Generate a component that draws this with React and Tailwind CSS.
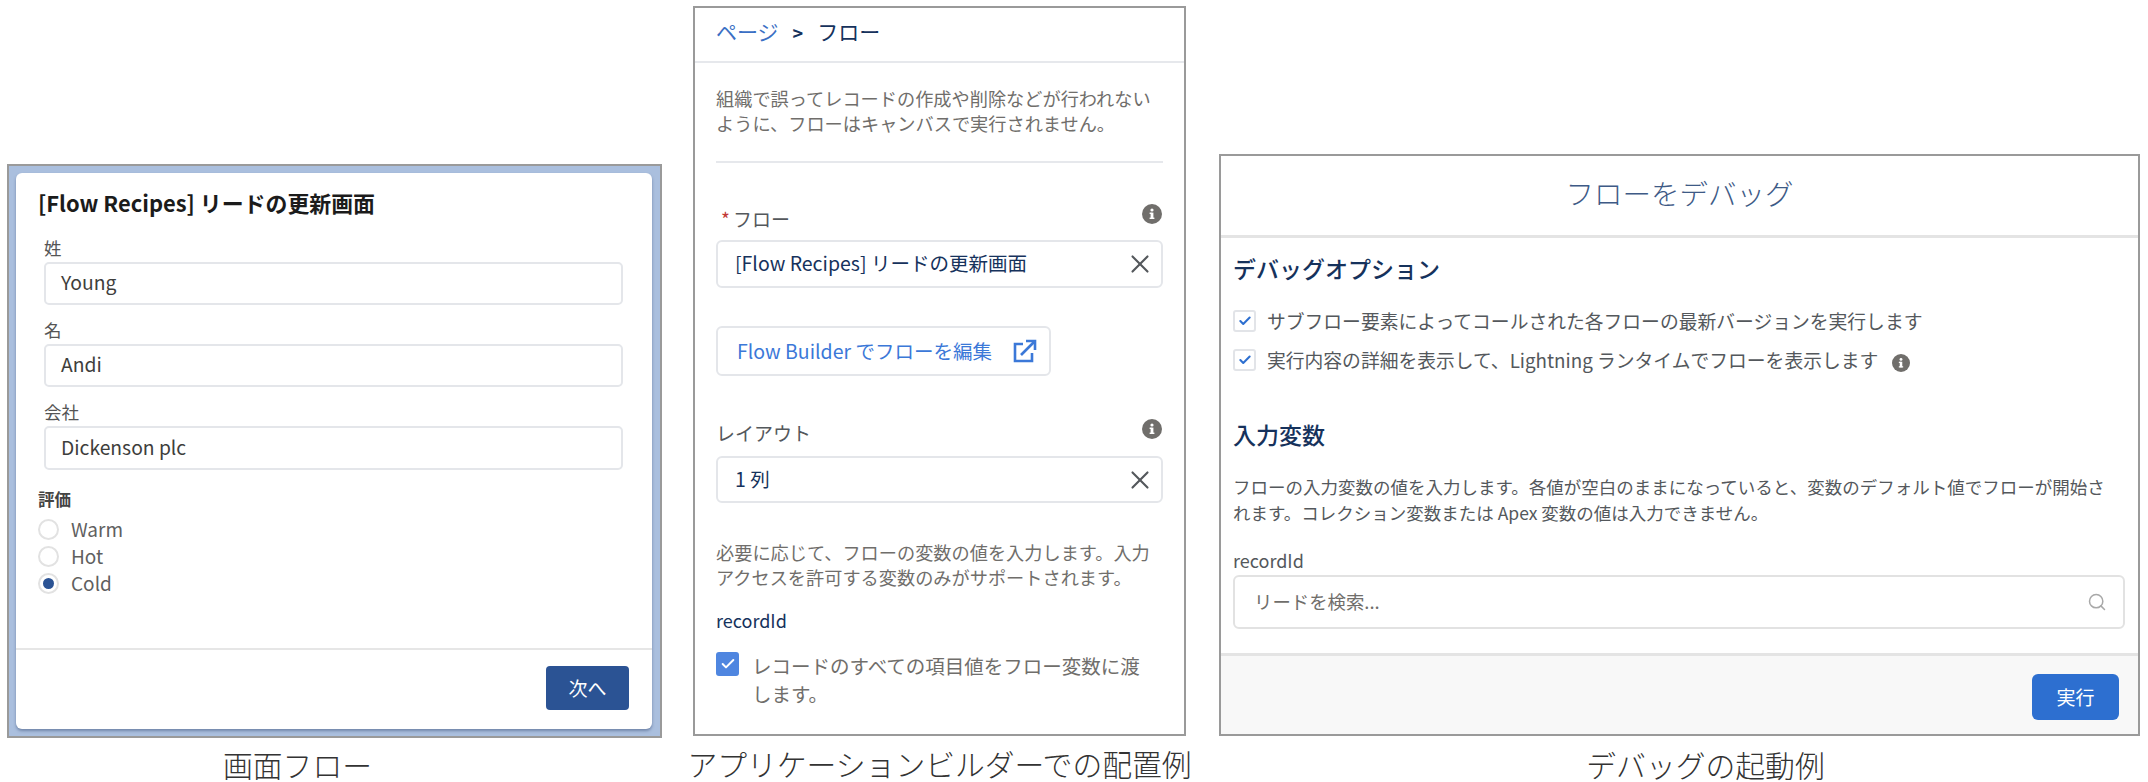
import { Check, Search, X } from 'lucide-react';

const InfoIcon = ({ className }) => (
  <svg viewBox="0 0 20 20" className={className}>
    <circle cx="10" cy="10" r="10" fill="#706e6b" />
    <rect x="8.6" y="8.6" width="2.8" height="6.2" fill="#fff" />
    <rect x="7.6" y="8.6" width="2" height="1.4" fill="#fff" />
    <rect x="7.6" y="13.6" width="4.8" height="1.4" fill="#fff" />
    <circle cx="10" cy="6" r="1.6" fill="#fff" />
  </svg>
);

const ExternalIcon = () => (
  <svg viewBox="0 0 24 24" className="ml-[21px] h-[24px] w-[24px]" fill="none" stroke="#3b78d8" strokeWidth="2.6">
    <path d="M10 5H2v17h17v-8" />
    <path d="M8 16 22 2" />
    <path d="M13 2h9v9" />
  </svg>
);

const TextField = ({ value, height }) => (
  <div className={`mr-[7px] ml-[6px] mt-[3px] flex items-center rounded-[5px] border-2 border-[#e4e6ea] pb-[2px] pl-[15px] text-[19.3px] text-[#3e3e3c] ${height}`}>
    {value}
  </div>
);

const LookupField = ({ value, height }) => (
  <div className={`flex items-center justify-between rounded-[6px] border-2 border-[#e4e6ea] pr-[6px] pb-[2px] pl-[17px] text-[19.5px] text-[#16325c] ${height}`}>
    <span>{value}</span>
    <X size={30} strokeWidth={1.7} className="mt-[2px] text-[#54585c]" />
  </div>
);

const RadioRow = ({ label, checked }) => (
  <div className="flex h-[27px] items-center text-[19px] text-[#5f5f5f]">
    <span className="flex h-[21px] w-[21px] items-center justify-center rounded-full border-2 border-[#e2e2e2]">
      {checked && <span className="h-[11px] w-[11px] rounded-full bg-[#2b5394]" />}
    </span>
    <span className="ml-[12px]">{label}</span>
  </div>
);

const DebugCheck = ({ children }) => (
  <div className="flex h-[22px] items-center">
    <span className="flex h-[22px] w-[23px] items-center justify-center rounded-[3px] border-2 border-[#e2e4e8]">
      <Check size={14} strokeWidth={3.5} className="text-[#2d6fd0]" />
    </span>
    <span className="ml-[11px] text-[18.8px] leading-[22px] text-[#54585c]">{children}</span>
  </div>
);

const Caption = ({ children, className }) => (
  <div className={`flex justify-center whitespace-nowrap text-[29.8px] leading-[36px] font-light text-[#333333] ${className}`}>
    {children}
  </div>
);

const ScreenFlow = () => (
  <div className="ml-[7px] w-[655px] pt-[164px]">
    <div className="h-[574px] border-2 border-[#9a9a9a] bg-[#aabfde] p-[7px] pr-[8px]">
      <div className="flex h-full flex-col rounded-[6px] bg-white shadow-[0_2px_3px_rgba(60,80,120,0.5)]">
        <div className="px-[22px]">
          <div className="mt-[15px] text-[21.9px] leading-[30px] font-bold text-[#1b1b1b]">[Flow Recipes] リードの更新画面</div>
          <div className="mt-[19px] ml-[6px] text-[17.5px] leading-[22px] text-[#555555]">姓</div>
          <TextField value="Young" height="h-[43px]" />
          <div className="mt-[14px] ml-[6px] text-[17.5px] leading-[22px] text-[#555555]">名</div>
          <TextField value="Andi" height="h-[43px]" />
          <div className="mt-[14px] ml-[6px] text-[17.5px] leading-[22px] text-[#555555]">会社</div>
          <TextField value="Dickenson plc" height="h-[44px]" />
          <div className="mt-[18px] text-[16.5px] leading-[22px] font-bold text-[#444444]">評価</div>
          <div className="mt-[6px]">
            <RadioRow label="Warm" />
            <RadioRow label="Hot" />
            <RadioRow label="Cold" checked />
          </div>
        </div>
        <div className="mt-auto flex h-[81px] justify-end border-t-2 border-[#e6e6e6] pt-[16px] pr-[23px]">
          <button className="h-[44px] w-[83px] rounded-[4px] bg-[#2b5394] text-[19px] text-white">次へ</button>
        </div>
      </div>
    </div>
    <Caption className="mt-[8px] pr-[74px]">画面フロー</Caption>
  </div>
);

const AppBuilder = () => (
  <div className="ml-[31px] w-[493px] pt-[6px]">
    <div className="h-[730px] border-2 border-[#9a9a9a] bg-white">
      <div className="flex h-[55px] items-center border-b-2 border-[#e6e8ec] px-[21px] pb-[5px] text-[21px]">
        <span className="text-[#3b6fc4]">ページ</span>
        <span className="mx-[14px] text-[18px] font-bold text-[#16325c]">&gt;</span>
        <span className="text-[#16325c]">フロー</span>
      </div>
      <div className="px-[21px]">
        <p className="mt-[23px] text-[18.2px] leading-[24.5px] text-[#706e6b]">
          組織で誤ってレコードの作成や削除などが行われないように、フローはキャンバスで実行されません。
        </p>
        <div className="mt-[26px] border-t-2 border-[#e6e8ec]" />
        <div className="mt-[44px] flex items-start justify-between">
          <div className="pl-[5px] text-[19px] leading-[24px] text-[#54585c]">
            <span className="mr-[3px] text-[#c23934]">*</span>フロー
          </div>
          <InfoIcon className="mt-[-3px] mr-[1px] h-[20px] w-[20px]" />
        </div>
        <div className="mt-[9px]">
          <LookupField value="[Flow Recipes] リードの更新画面" height="h-[48px]" />
        </div>
        <div className="mt-[38px] flex h-[50px] w-[335px] items-center rounded-[6px] border-2 border-[#e4e6ea] pl-[19px] text-[19.5px] text-[#3b78d8]">
          Flow Builder でフローを編集
          <ExternalIcon />
        </div>
        <div className="mt-[45px] flex items-start justify-between">
          <div className="text-[19px] leading-[24px] text-[#54585c]">レイアウト</div>
          <InfoIcon className="mt-[-2px] mr-[1px] h-[20px] w-[20px]" />
        </div>
        <div className="mt-[11px]">
          <LookupField value="1 列" height="h-[47px]" />
        </div>
        <p className="mt-[37px] text-[18.2px] leading-[24.5px] text-[#706e6b]">
          必要に応じて、フローの変数の値を入力します。入力アクセスを許可する変数のみがサポートされます。
        </p>
        <div className="mt-[19px] text-[18px] leading-[24px] text-[#16325c]">recordId</div>
        <div className="mt-[20px] flex items-start">
          <span className="flex h-[24px] w-[23px] shrink-0 items-center justify-center rounded-[3px] bg-[#4f86e0]">
            <Check size={16} strokeWidth={3} className="text-white" />
          </span>
          <span className="ml-[13px] pr-[10px] text-[19.5px] leading-[28px] text-[#706e6b]">レコードのすべての項目値をフロー変数に渡します。</span>
        </div>
      </div>
    </div>
    <Caption className="mt-[9px]">アプリケーションビルダーでの配置例</Caption>
  </div>
);

const DebugFlow = () => (
  <div className="ml-[33px] w-[921px] pt-[154px]">
    <div className="flex h-[582px] flex-col border-2 border-[#9a9a9a] bg-white">
      <div className="flex h-[82px] items-center justify-center border-b-[3px] border-[#e4e4e4] pb-[5px] text-[28.5px] font-light text-[#3e5a86]">
        フローをデバッグ
      </div>
      <div className="px-[12px]">
        <div className="mt-[15px] text-[23px] leading-[30px] font-medium text-[#16325c]">デバッグオプション</div>
        <div className="mt-[27px] flex flex-col gap-[17px]">
          <DebugCheck>サブフロー要素によってコールされた各フローの最新バージョンを実行します</DebugCheck>
          <DebugCheck>
            <span className="flex items-center">
              実行内容の詳細を表示して、Lightning ランタイムでフローを表示します
              <InfoIcon className="mt-[6px] ml-[14px] h-[18px] w-[18px]" />
            </span>
          </DebugCheck>
        </div>
        <div className="mt-[48px] text-[23px] leading-[30px] font-medium text-[#16325c]">入力変数</div>
        <p className="mt-[25px] pr-[14px] text-[17.5px] leading-[26px] text-[#54585c]">
          フローの入力変数の値を入力します。各値が空白のままになっていると、変数のデフォルト値でフローが開始されます。コレクション変数または Apex 変数の値は入力できません。
        </p>
        <div className="mt-[22px] text-[18px] leading-[24px] text-[#54585c]">recordId</div>
        <div className="mt-[3px] mr-[1px] flex h-[54px] items-center justify-between rounded-[6px] border-2 border-[#e2e2e2] pr-[16px] pl-[19px] text-[18.4px] text-[#706e6b]">
          <span>リードを検索...</span>
          <Search size={20} strokeWidth={1.8} className="text-[#a8a8a8]" />
        </div>
      </div>
      <div className="mt-[24px] flex flex-1 justify-end border-t-[3px] border-[#e4e4e4] bg-[#f8f8f8] pt-[18px] pr-[19px]">
        <button className="h-[46px] w-[87px] rounded-[6px] bg-[#2d6fd0] text-[19px] text-white">実行</button>
      </div>
    </div>
    <Caption className="mt-[10px] pl-[52px]">デバッグの起動例</Caption>
  </div>
);

export default function App() {
  return (
    <div className="flex h-[782px] w-[2148px] items-start bg-white font-['Noto_Sans_CJK_JP','Noto_Sans',sans-serif]">
      <ScreenFlow />
      <AppBuilder />
      <DebugFlow />
    </div>
  );
}
